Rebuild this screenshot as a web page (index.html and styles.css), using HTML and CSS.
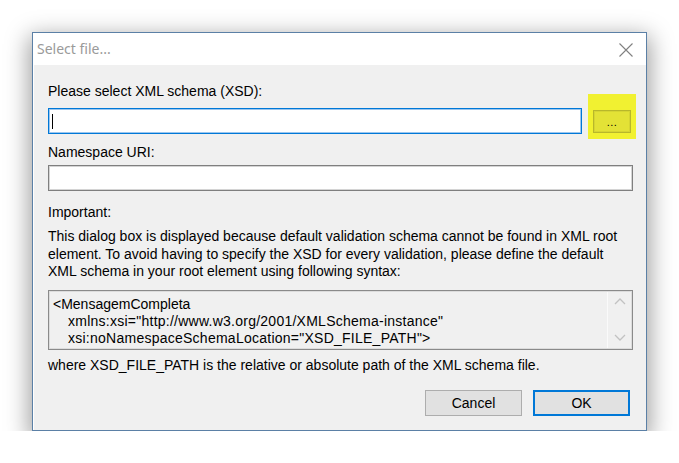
FILE: index.html
```html
<!DOCTYPE html>
<html>
<head>
<meta charset="utf-8">
<link rel="stylesheet" href="styles.css">
</head>
<body>
<div class="window">
  <div class="titlebar">
    <span class="title">Select file...</span>
    <svg class="close" width="16" height="16" viewBox="0 0 16 16"><path d="M1.5 1.5 L14.5 14.5 M14.5 1.5 L1.5 14.5" stroke="#808080" stroke-width="1.1" fill="none"/></svg>
  </div>
  <div class="content">
    <div class="label first">Please select XML schema (XSD):</div>
    <div class="row">
      <div class="input focused"><span class="caret"></span></div>
      <div class="highlight"><div class="browse">...</div></div>
    </div>
    <div class="label second">Namespace URI:</div>
    <div class="input plain"></div>
    <div class="label important">Important:</div>
    <div class="para">This dialog box is displayed because default validation schema cannot be found in XML root<br>element. To avoid having to specify the XSD for every validation, please define the default<br>XML schema in your root element using following syntax:</div>
    <div class="code">
      <div class="code-text">
        <div>&lt;MensagemCompleta</div>
        <div class="indent">xmlns:xsi="http://www.w3.org/2001/XMLSchema-instance"</div>
        <div class="indent">xsi:noNamespaceSchemaLocation="XSD_FILE_PATH"&gt;</div>
      </div>
      <div class="scrollbar">
        <svg width="12" height="8" viewBox="0 0 12 8"><path d="M1 7 L6 2 L11 7" stroke="#c2c2c2" stroke-width="1.3" fill="none"/></svg>
        <svg width="12" height="8" viewBox="0 0 12 8"><path d="M1 1 L6 6 L11 1" stroke="#c2c2c2" stroke-width="1.3" fill="none"/></svg>
      </div>
    </div>
    <div class="label where">where XSD_FILE_PATH is the relative or absolute path of the XML schema file.</div>
    <div class="buttons">
      <div class="btn">Cancel</div>
      <div class="btn default">OK</div>
    </div>
  </div>
</div>
</body>
</html>
```
FILE: styles.css
```css
html, body {
  margin: 0;
  padding: 0;
  background: #ffffff;
}
body {
  padding: 32px 0 0 32px;
  font-family: "Liberation Sans", Arial, sans-serif;
  font-size: 14px;
  color: #000;
}
.window {
  width: 613px;
  height: 397px;
  border: 1px solid #5b80a6;
  background: #f0f0f0;
  box-shadow: 0 7px 22px 3px rgba(0, 0, 0, 0.38);
  display: flex;
  flex-direction: column;
}
.titlebar {
  height: 32px;
  background: #ffffff;
  display: flex;
  align-items: center;
  justify-content: space-between;
  padding: 0 12px 0 4px;
}
.title {
  font-family: "Noto Sans", "Open Sans", sans-serif;
  font-size: 14px;
  color: #9a9a9a;
  margin-top: -1px;
}
.close {
  display: block;
  margin-top: 2px;
}
.content {
  flex: 1;
  padding: 18px 13px 0 15px;
  display: flex;
  flex-direction: column;
  box-shadow: inset 1px 0 0 #ffffff;
}
.label {
  line-height: 17px;
  white-space: nowrap;
}
.row {
  display: flex;
  align-items: center;
  margin-top: 8px;
  padding-right: 2px;
}
.input {
  height: 24px;
  background: #ffffff;
  box-sizing: content-box;
}
.input.focused {
  flex: 1;
  border: 1px solid #0078d7;
  box-shadow: inset 0 0 0 1px #9cc6ee;
  display: flex;
  align-items: center;
  padding-left: 3px;
}
.caret {
  width: 1px;
  height: 15px;
  background: #000;
}
.highlight {
  margin: -16px -5px -6px 6px;
  padding: 16px 5px 6px 5px;
  background: #f1f131;
}
.browse {
  width: 36px;
  border: 1px solid #b8b72b;
  background: #e3e236;
  box-shadow: inset 0 0 0 1px #d6d533;
  display: flex;
  align-items: center;
  justify-content: center;
  font-size: 11px;
  line-height: 1;
  padding-top: 2px;
  box-sizing: content-box;
  height: 19px;
  letter-spacing: 0.5px;
}
.label.second {
  margin-top: 10px;
}
.input.plain {
  margin-top: 4px;
  border: 1px solid #7f7f7f;
  box-shadow: inset 0 0 0 1px #d4d4d4;
}
.label.important {
  margin-top: 13px;
}
.para {
  margin-top: 7px;
  line-height: 17.5px;
  white-space: nowrap;
}
.code {
  margin-top: 9px;
  height: 58px;
  border: 1px solid #8a8a8a;
  box-shadow: inset 0 0 0 1px #dcdcdc;
  display: flex;
  background: #f0f0f0;
}
.code-text {
  flex: 1;
  padding: 5px 0 0 4px;
  line-height: 17px;
  white-space: nowrap;
  overflow: hidden;
}
.indent {
  padding-left: 15px;
  letter-spacing: 0.25px;
}
.scrollbar {
  width: 23px;
  border-left: 1px solid #fafafa;
  margin: 1px 1px 1px 0;
  background: #f0f0f0;
  display: flex;
  flex-direction: column;
  justify-content: space-between;
  align-items: center;
  padding: 5px 0 6px;
}
.scrollbar svg {
  display: block;
}
.label.where {
  margin-top: 7px;
}
.buttons {
  display: flex;
  justify-content: flex-end;
  gap: 11px;
  margin-top: 16px;
  padding-right: 3px;
}
.btn {
  width: 95px;
  height: 24px;
  border: 1px solid #adadad;
  background: #e1e1e1;
  display: flex;
  align-items: center;
  justify-content: center;
  box-sizing: content-box;
}
.btn.default {
  width: 93px;
  height: 22px;
  border: 2px solid #0078d7;
}
```
